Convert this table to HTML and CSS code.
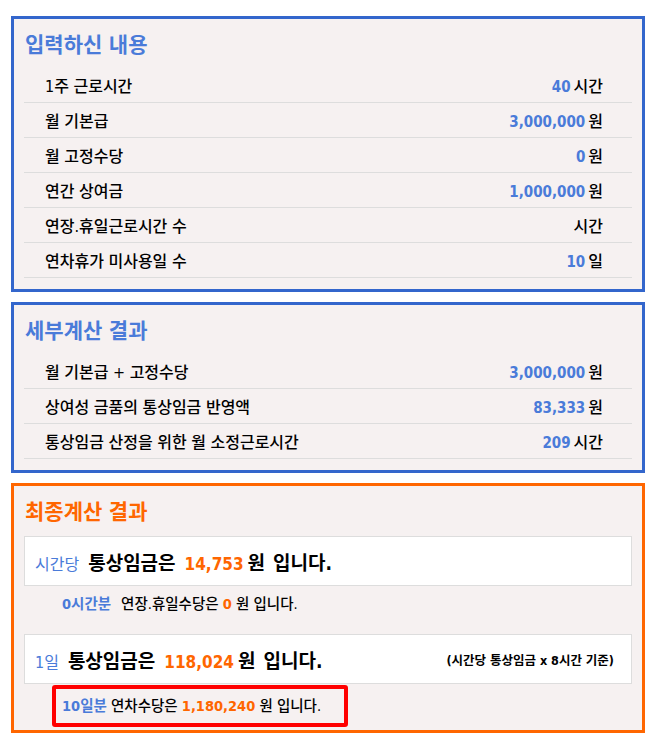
FILE: index.html
```html
<!DOCTYPE html>
<html lang="ko">
<head>
  <meta charset="UTF-8">
  <meta name="viewport" content="width=device-width, initial-scale=1.0">
  <title>통상임금 계산 결과</title>
  <link rel="stylesheet" href="styles.css">
</head>
<body>
  <div class="wrap">
    <!-- 입력값 -->
    <div class="box">
      <h2 class="box-title">입력하신 내용</h2>
      <div class="row"><span>1주 근로시간</span><span><em class="num">40</em>시간</span></div>
      <div class="row"><span>월 기본급</span><span><em class="num">3,000,000</em>원</span></div>
      <div class="row"><span>월 고정수당</span><span><em class="num">0</em>원</span></div>
      <div class="row"><span>연간 상여금</span><span><em class="num">1,000,000</em>원</span></div>
      <div class="row"><span>연장.휴일근로시간 수</span><span>시간</span></div>
      <div class="row"><span>연차휴가 미사용일 수</span><span><em class="num">10</em>일</span></div>
    </div>

    <!-- 세부계산 -->
    <div class="box">
      <h2 class="box-title">세부계산 결과</h2>
      <div class="row"><span>월 기본급 + 고정수당</span><span><em class="num">3,000,000</em>원</span></div>
      <div class="row"><span>상여성 금품의 통상임금 반영액</span><span><em class="num">83,333</em>원</span></div>
      <div class="row"><span>통상임금 산정을 위한 월 소정근로시간</span><span><em class="num">209</em>시간</span></div>
    </div>

    <!-- 최종계산 -->
    <div class="box box-final">
      <h2 class="box-title">최종계산 결과</h2>
      <div class="result first">
        <div>
          <span class="per">시간당</span><b>통상임금은</b><em class="big-num">14,753</em><b class="won">원</b><b>입니다.</b>
        </div>
      </div>
      <p class="note"><b class="blue gap">0시간분</b>연장.휴일수당은 <b class="orange">0</b> 원 입니다.</p>

      <div class="result second">
        <div>
          <span class="per">1일</span><b>통상임금은</b><em class="big-num">118,024</em><b class="won">원</b><b>입니다.</b>
        </div>
        <span class="basis">(시간당 통상임금 x 8시간 기준)</span>
      </div>
      <p class="note highlight"><b class="blue">10일분</b> 연차수당은 <b class="orange">1,180,240</b> 원 입니다.</p>
    </div>
  </div>
</body>
</html>
```

FILE: styles.css
```css
body {
    margin: 0;
    background-color: #fff;
    color: #000;
    font-family: "DejaVu Sans Condensed", "DejaVu Sans", "Noto Sans CJK KR", sans-serif;
}

.wrap {
    padding: 16px 0 0 11px;
}

/* 공통 박스 */
.box {
    box-sizing: border-box;
    width: 634px;
    margin-bottom: 10px;
    padding: 0 10px 11px;
    background-color: #f6f1f1;
    border: 3px solid #3366cc;
}

.box-title {
    margin: 0;
    padding: 14px 1px 11px;
    font-size: 21px;
    line-height: 24px;
    font-weight: bold;
    color: #4a7bd9;
}

.row {
    display: flex;
    justify-content: space-between;
    align-items: center;
    height: 34px;
    padding: 0 29px 0 21px;
    border-bottom: 1px solid #ddd;
    font-size: 16px;
    font-weight: 500;
}

.num {
    font-style: normal;
    font-weight: bold;
    font-size: 15px;
    color: #4a7bd9;
    margin-right: 3px;
}

/* 최종계산 */
.box-final {
    padding-bottom: 3px;
    border-color: #ff6600;
}

.box-final .box-title {
    color: #ff6600;
}

.result {
    display: flex;
    justify-content: space-between;
    align-items: center;
    height: 48px;
    padding: 0 17px 0 10px;
    background: #fff;
    border: 1px solid #ddd;
    font-size: 19px;
}

.result.first {
    margin-top: 1px;
}

.result.second {
    margin-top: 21px;
}

.per {
    font-size: 16px;
    color: #4a7bd9;
    margin-right: 9px;
}

.big-num {
    font-style: normal;
    font-weight: bold;
    font-size: 17px;
    color: #ff6600;
    margin: 0 4px 0 9px;
}

.won {
    margin-right: 8px;
}

.basis {
    font-size: 12.5px;
    font-weight: bold;
}

.note {
    margin: 0;
    padding: 9px 0 0 38px;
    font-size: 14.5px;
    line-height: 18px;
    font-weight: 500;
}

.blue {
    color: #4a7bd9;
}

.orange {
    color: #ff6600;
}

.gap {
    margin-right: 10px;
}

.note.highlight {
    box-sizing: border-box;
    width: 296px;
    margin: 1px 0 0 28px;
    padding: 0 0 0 6px;
    line-height: 34px;
    border: 4px solid #ff0000;
    border-radius: 3px;
}
```
